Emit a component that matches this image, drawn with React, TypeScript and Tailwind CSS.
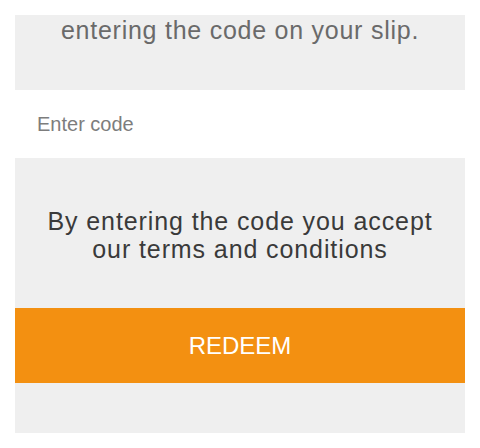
import { useState } from 'react'

export default function App() {
  const [code, setCode] = useState('')

  return (
    <div className="min-h-[448px] bg-white px-[15px] pt-[15px] font-['Liberation_Sans',Arial,sans-serif]">
      <div className="h-[75px] bg-[#efefef] pt-[2px] text-center">
        <p className="text-[25px] leading-[26px] tracking-[0.75px] text-[#6a6a6a]">
          entering the code on your slip.
        </p>
      </div>

      <div className="flex h-[68px] items-center bg-white pl-[22px]">
        <input
          value={code}
          onChange={(e) => setCode(e.target.value)}
          placeholder="Enter code"
          className="w-full bg-transparent text-[20px] text-[#666666] outline-none placeholder:text-[#7d7d7d]"
        />
      </div>

      <div className="flex h-[150px] items-center justify-center bg-[#efefef] pt-[4px] text-center">
        <p className="text-[25px] leading-[28px] tracking-[0.9px] text-[#3a3a3a]">
          By entering the code you accept
          <br />
          our terms and conditions
        </p>
      </div>

      <button className="flex h-[75px] w-full items-center justify-center bg-[#f39011] text-[24px] text-white">
        REDEEM
      </button>

      <div className="h-[50px] bg-[#efefef]" />
    </div>
  )
}
